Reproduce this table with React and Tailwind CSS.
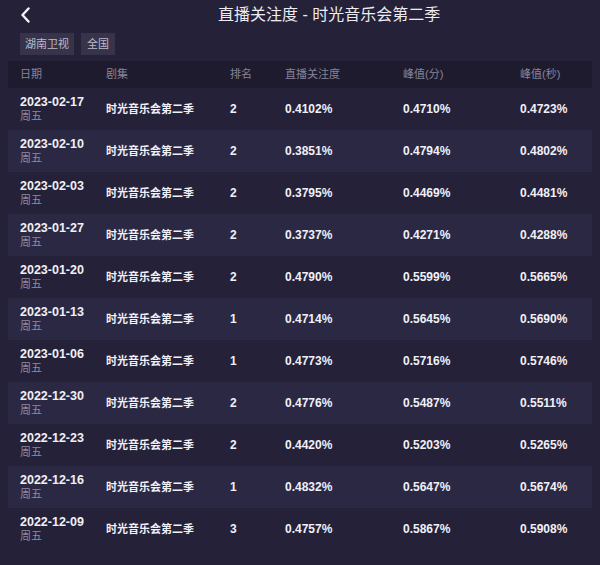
import React from 'react';

const rows = [
  ['2023-02-17', '2', '0.4102%', '0.4710%', '0.4723%'],
  ['2023-02-10', '2', '0.3851%', '0.4794%', '0.4802%'],
  ['2023-02-03', '2', '0.3795%', '0.4469%', '0.4481%'],
  ['2023-01-27', '2', '0.3737%', '0.4271%', '0.4288%'],
  ['2023-01-20', '2', '0.4790%', '0.5599%', '0.5665%'],
  ['2023-01-13', '1', '0.4714%', '0.5645%', '0.5690%'],
  ['2023-01-06', '1', '0.4773%', '0.5716%', '0.5746%'],
  ['2022-12-30', '2', '0.4776%', '0.5487%', '0.5511%'],
  ['2022-12-23', '2', '0.4420%', '0.5203%', '0.5265%'],
  ['2022-12-16', '1', '0.4832%', '0.5647%', '0.5674%'],
  ['2022-12-09', '3', '0.4757%', '0.5867%', '0.5908%'],
];

const cols = 'grid grid-cols-[86px_124px_55px_118px_117px_1fr] pl-3';

export default function App() {
  return (
    <div
      className="w-[600px] h-[565px] overflow-hidden bg-[#242138] text-[#f1f0f6]"
      style={{ fontFamily: '"Liberation Sans", "Noto Sans CJK SC", sans-serif' }}
    >
      {/* Title bar */}
      <div className="h-[30px] flex items-center pl-5">
        <svg width="10" height="16" viewBox="0 0 10 16" className="shrink-0">
          <polyline points="8.5,1.5 2.5,8 8.5,14.5" fill="none" stroke="#f4f4f8" strokeWidth="2.4" strokeLinecap="round" strokeLinejoin="round" />
        </svg>
        <h1 className="ml-[188px] text-[16px] text-[#ececf2] whitespace-nowrap leading-none">
          直播关注度 - 时光音乐会第二季
        </h1>
      </div>

      {/* Tags */}
      <div className="flex gap-[7px] pl-5 mt-[3px]">
        <span className="h-[22px] px-[5px] flex items-center bg-[#36334b] text-[#bdbbc8] text-[11px]">湖南卫视</span>
        <span className="h-[22px] px-[6px] flex items-center bg-[#36334b] text-[#bdbbc8] text-[11px]">全国</span>
      </div>

      {/* Table */}
      <div className="mx-2 mt-[6px]">
        <div className={`${cols} h-[27px] items-center bg-[#1e1b2e] text-[11px] text-[#86849a]`}>
          <span>日期</span>
          <span>剧集</span>
          <span>排名</span>
          <span>直播关注度</span>
          <span>峰值(分)</span>
          <span>峰值(秒)</span>
        </div>
        {rows.map((r, i) => (
          <div
            key={r[0]}
            className={`${cols} h-[42px] items-center text-[12px] font-bold ${i % 2 === 1 ? 'bg-[#2b2843]' : ''}`}
          >
            <div className="flex flex-col leading-[14px]">
              <span className="text-[12.5px]">{r[0]}</span>
              <span className="text-[11px] font-normal text-[#8e8ca0]">周五</span>
            </div>
            <span className="text-[11px]">时光音乐会第二季</span>
            <span>{r[1]}</span>
            <span>{r[2]}</span>
            <span>{r[3]}</span>
            <span>{r[4]}</span>
          </div>
        ))}
      </div>
    </div>
  );
}
